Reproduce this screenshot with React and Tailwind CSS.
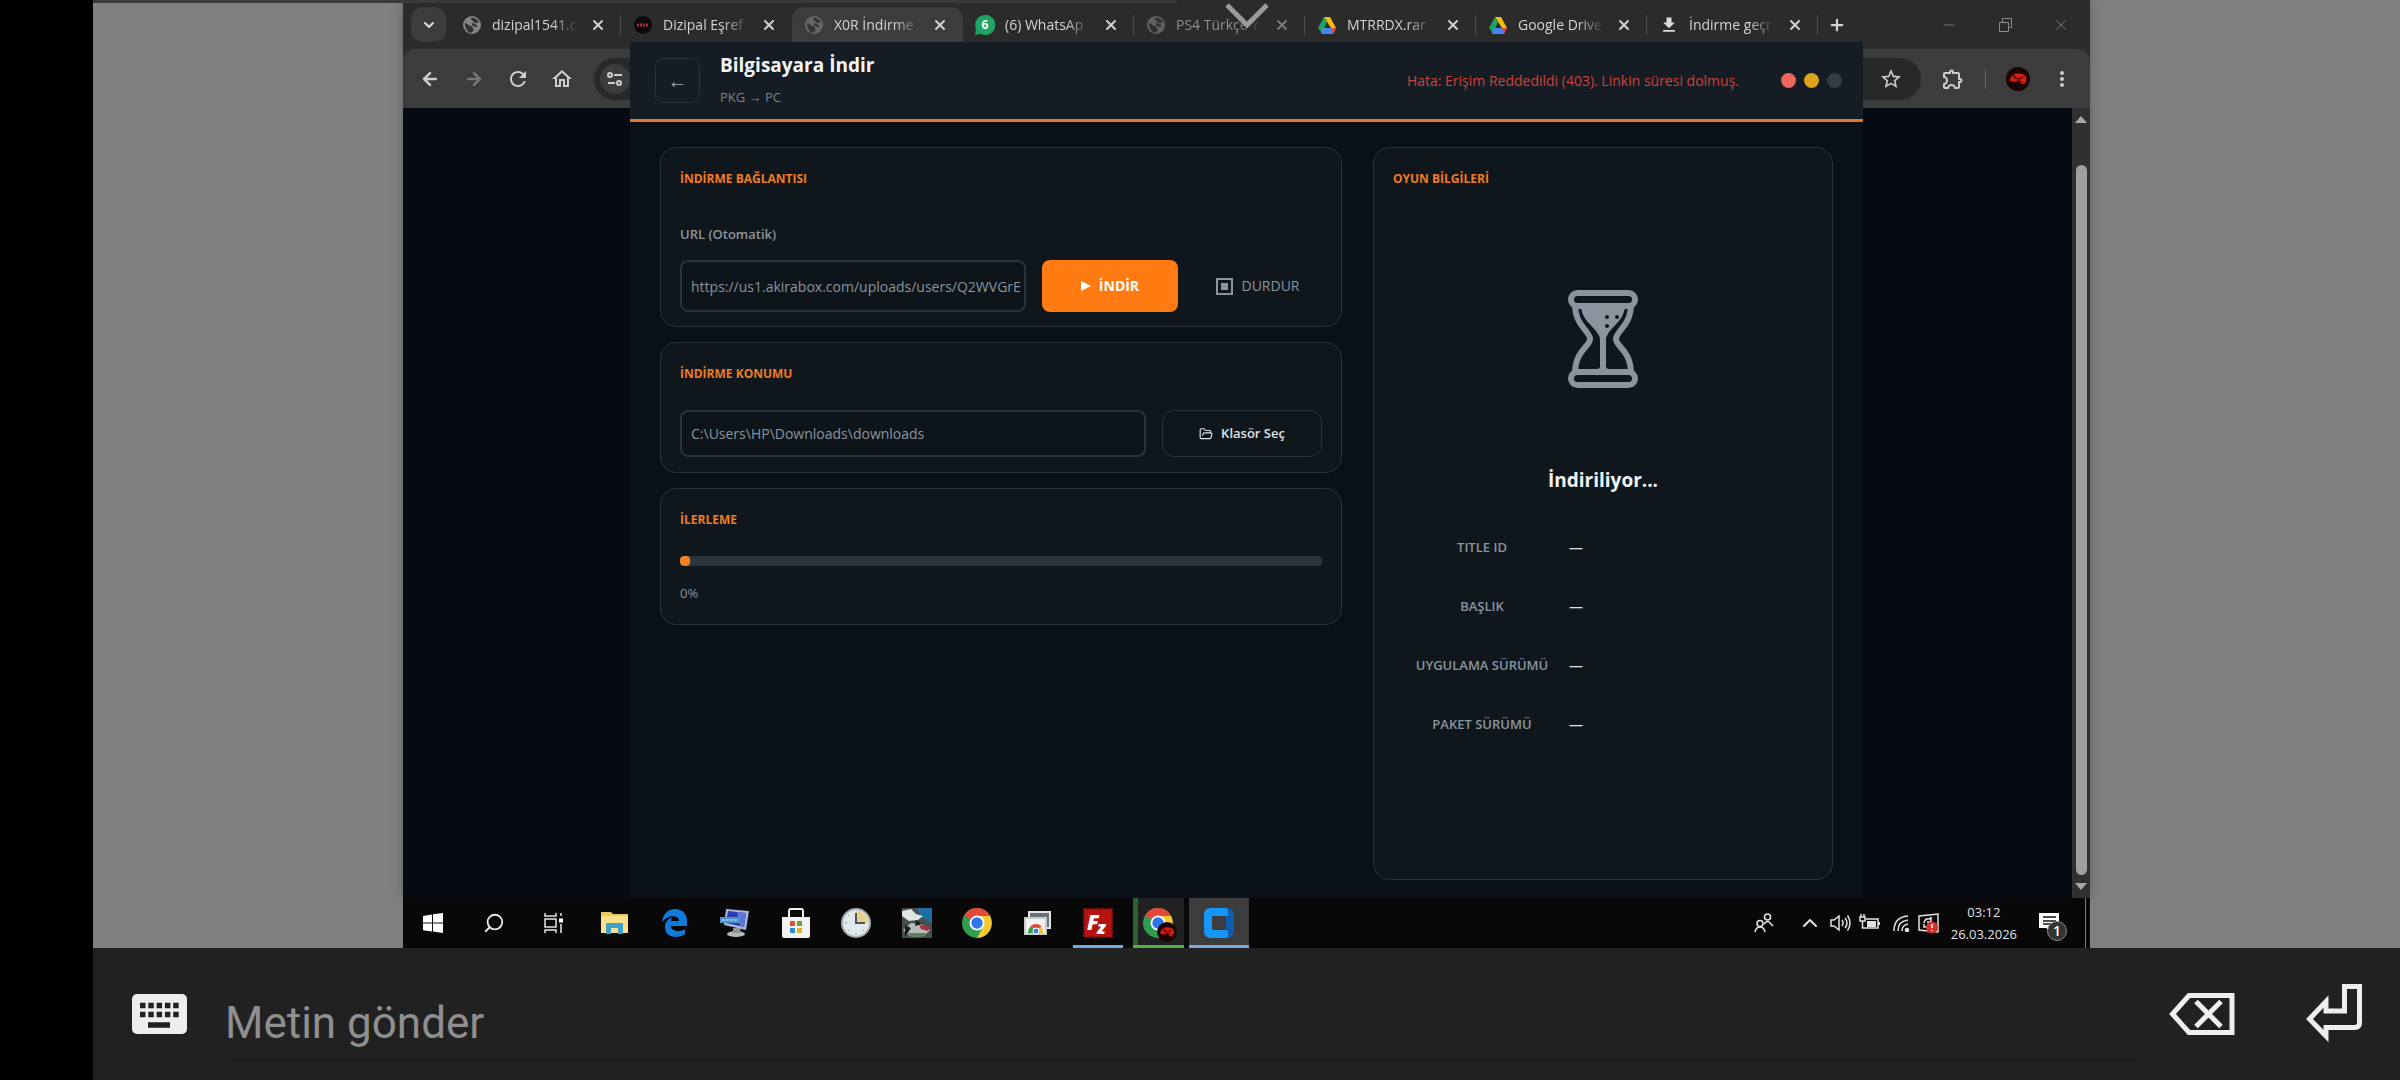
import { useState } from 'react';
import {
  ArrowLeft,
  ArrowRight,
  ChevronDown,
  ChevronUp,
  FolderOpen,
  Minus,
  Plus,
  Search,
  X,
} from 'lucide-react';
import { MdDownload, MdStarBorder, MdMoreVert, MdRefresh, MdOutlineHome, MdOutlineExtension } from 'react-icons/md';

const tabs = [
  { id: 1, title: 'dizipal1541.c', icon: 'globe' },
  { id: 2, title: 'Dizipal Eşref', icon: 'dizipal' },
  { id: 3, title: 'X0R İndirme', icon: 'globe', active: true },
  { id: 4, title: '(6) WhatsAp', icon: 'whatsapp' },
  { id: 5, title: 'PS4 Türkçe Y', icon: 'globe', dim: true },
  { id: 6, title: 'MTRRDX.rar', icon: 'drive' },
  { id: 7, title: 'Google Drive', icon: 'drive' },
  { id: 8, title: 'İndirme geçr', icon: 'download' },
];

const gameInfo = ['TITLE ID', 'BAŞLIK', 'UYGULAMA SÜRÜMÜ', 'PAKET SÜRÜMÜ'];

function GlobeIcon() {
  return (
    <svg viewBox="0 0 18 18" className="size-[18px]">
      <circle cx="9" cy="9" r="9" fill="#858585" />
      <path d="M2 7c3 0 3 3 6 3s1 3 3 4l-3 3C4 16 2 12 2 7zM8 2c0 3 2 2 3 4s3 1 5 0C14 3 11 1 8 2zM9 7c2 0 3 2 5 2v2c-3 0-6-2-5-4z" fill="#333" />
    </svg>
  );
}

function DizipalIcon() {
  return (
    <svg viewBox="0 0 18 18" className="size-[18px]">
      <circle cx="9" cy="9" r="9" fill="#0b0b0b" />
      <path d="M3 9h12" stroke="#b3282d" strokeWidth="3" strokeDasharray="2 1" />
    </svg>
  );
}

function WhatsAppIcon() {
  return (
    <svg viewBox="0 0 20 20" className="size-5">
      <path d="M10 0a10 10 0 1 1-4 19L0 20l1-6A10 10 0 0 1 10 0z" fill="#1fa463" />
      <text x="10" y="14" textAnchor="middle" fontSize="12" fontWeight="700" fill="#fff">6</text>
    </svg>
  );
}

function DriveIcon() {
  return (
    <svg viewBox="0 0 18 17" className="h-[17px] w-[18px]">
      <path d="M6 0h6l6 11h-5z" fill="#fbbc04" />
      <path d="M6 0l3 5-5 11-4-5z" fill="#1ea362" />
      <path d="M5 11h13l-3 6H3z" fill="#4285f4" />
      <path d="M13 11h5l-3 6z" fill="#ea4335" />
    </svg>
  );
}

function TabIcon({ name }) {
  if (name === 'dizipal') return <DizipalIcon />;
  if (name === 'whatsapp') return <WhatsAppIcon />;
  if (name === 'drive') return <DriveIcon />;
  if (name === 'download') return <MdDownload className="size-5 text-[#dcdcdc]" />;
  return <GlobeIcon />;
}

function Tab({ tab }) {
  return (
    <div className={`flex min-w-0 max-w-[171px] flex-1 items-center rounded-t-xl pb-[6px] pl-3 ${tab.active ? 'bg-[#3c3c3c]' : ''}`}>
      <span className={`flex w-5 shrink-0 justify-center ${tab.dim || tab.active ? 'opacity-60' : ''}`}>
        <TabIcon name={tab.icon} />
      </span>
      <span className={`ml-[10px] w-[86px] whitespace-nowrap mask-r-from-70% ${tab.dim ? 'text-[#8f8f8f]' : 'text-[#d4d4d4]'}`}>
        {tab.title}
      </span>
      <button aria-label="Sekmeyi kapat" className={`ml-3 ${tab.dim ? 'text-[#7a7a7a]' : 'text-[#d0d0d0]'}`}>
        <X className="size-4" strokeWidth={3} />
      </button>
      {!tab.active && tab.id !== 2 && <span className="ml-auto h-5 w-px bg-[#4c4c4c]" />}
    </div>
  );
}

function RedAvatar({ className }) {
  return (
    <svg viewBox="0 0 24 24" className={className}>
      <circle cx="12" cy="12" r="12" fill="#1c0403" />
      <path d="M4 12c2-5 7-7 12-5 4 1 5 4 4 7-1 3-4 4-6 2l-1-3-4 2-5-1z" fill="#d81c10" />
      <path d="M8 11l5 1 4-2M12 14l4 1M7 9l3 1" stroke="#5c0a06" strokeWidth="1.500" fill="none" />
    </svg>
  );
}

function Browser() {
  return (
    <div className="col-start-1 row-start-1 flex flex-col bg-[#2b2b2b]">
      <div className="flex h-[49px] pl-2 pt-[7px] text-sm">
        <button aria-label="Sekmelerde ara" className="mr-1 flex size-[35px] items-center justify-center rounded-xl bg-[#3c3c3c] text-[#dcdcdc]">
          <ChevronDown className="size-4" strokeWidth={3} />
        </button>
        <div className="flex h-[42px] min-w-0 flex-1">
          {tabs.map((tab) => (
            <Tab key={tab.id} tab={tab} />
          ))}
          <button aria-label="Yeni sekme" className="ml-[10px] pb-[6px] text-[#d0d0d0]">
            <Plus className="size-[18px]" strokeWidth={3} />
          </button>
        </div>
        <div className="flex h-9 gap-[38px] pr-5 text-[#8a8a8a]">
          <button aria-label="Simge durumuna küçült"><Minus className="size-[18px]" strokeWidth={1} /></button>
          <button aria-label="Geri yükle">
            <svg viewBox="0 0 18 18" className="size-[18px]" fill="none" stroke="currentColor">
              <path d="M3.500 6.500h9v9h-9zM6.500 6v-3.500h9v9h-3" />
            </svg>
          </button>
          <button aria-label="Kapat"><X className="size-[18px]" strokeWidth={1} /></button>
        </div>
      </div>

      <div className="flex h-[59px] items-center rounded-t-xl bg-[#3c3c3c] pl-[15px] text-[#cdcdcd]">
        <div className="flex gap-5">
          <button aria-label="Geri"><ArrowLeft className="size-6 p-[2px]" strokeWidth={3} /></button>
          <button aria-label="İleri" className="text-[#777]"><ArrowRight className="size-6 p-[2px]" strokeWidth={3} /></button>
          <button aria-label="Yenile"><MdRefresh className="size-6" /></button>
          <button aria-label="Ana sayfa"><MdOutlineHome className="size-6" /></button>
        </div>
        <div className="ml-5 flex h-[42px] flex-1 items-center justify-between rounded-full bg-[#282828] pl-[6px] pr-[18px]">
          <button aria-label="Site bilgileri" className="flex size-[30px] items-center justify-center rounded-full bg-[#3c3c3c]">
            <svg viewBox="0 0 18 18" className="size-[18px]" fill="none" stroke="currentColor" strokeWidth="2">
              <circle cx="4" cy="5" r="2" />
              <path d="M8 5h8M2 13h7" />
              <circle cx="13" cy="13" r="2" />
            </svg>
          </button>
          <button aria-label="Yer işareti ekle"><MdStarBorder className="size-6" /></button>
        </div>
        <button aria-label="Uzantılar" className="ml-5"><MdOutlineExtension className="size-6" /></button>
        <span className="mx-5 h-5 w-px bg-[#6a6a6a]" />
        <button aria-label="Profil"><RedAvatar className="size-6" /></button>
        <button aria-label="Menü" className="mr-4 ml-5"><MdMoreVert className="size-6" /></button>
      </div>

      <div className="flex flex-1 justify-end bg-[#060a12]">
        <div className="flex w-[18px] flex-col items-center gap-2 bg-[#303030] py-2 text-[#a8a8a8]">
          <svg viewBox="0 0 12 7" className="h-[7px] w-3" fill="currentColor"><path d="M6 0l6 7H0z" /></svg>
          <div className="mt-[34px] w-[11px] flex-1 rounded-full bg-[#9f9f9f]" />
          <svg viewBox="0 0 12 7" className="h-[7px] w-3" fill="currentColor"><path d="M0 0h12L6 7z" /></svg>
        </div>
      </div>
    </div>
  );
}

function Hourglass() {
  return (
    <svg viewBox="0 0 70 98" className="h-[98px] w-[70px]" fill="none" stroke="#8b949e">
      <rect x="3" y="3" width="64" height="13" rx="6.500" strokeWidth="6" />
      <rect x="3" y="82" width="64" height="13" rx="6.500" strokeWidth="6" />
      <path d="M7 14c0 22 15 27 15 35S7 60 7 84M63 14c0 22-15 27-15 35s15 11 15 35" strokeWidth="6" />
      <path d="M13 15h44c0 15-13 21-17 29-2 3-2 4-2 8v24c0 2 1 3 3 3h13c2 0 3 2 3 4H13c0-2 1-4 3-4h13c2 0 3-1 3-3V52c0-4 0-5-2-8-4-8-17-14-17-29z" fill="#8b949e" stroke="none" />
      <g fill="#0f171d" stroke="none">
        <circle cx="39" cy="27" r="2" />
        <circle cx="49" cy="27" r="2" />
        <circle cx="39" cy="36" r="2" />
      </g>
    </svg>
  );
}

function Card({ title, className, children }) {
  return (
    <section className={`rounded-2xl border border-[#2a333a] bg-[#0f171d] px-[19px] pt-[21px] ${className}`}>
      <h2 className="text-xs leading-5 font-bold text-[#f07c22]">{title}</h2>
      {children}
    </section>
  );
}

function DownloadWindow() {
  const [url, setUrl] = useState('https://us1.akirabox.com/uploads/users/Q2WVGrE');
  const [folder, setFolder] = useState('C:\\Users\\HP\\Downloads\\downloads');
  const progress = 0;

  return (
    <div className="z-10 col-start-1 row-start-1 mx-[227px] mt-[42px] flex flex-col bg-[#0a1017]">
      <header className="flex h-20 items-center border-b-[3px] border-[#dc7a34] bg-[#151c23] pr-[21px] pl-[25px]">
        <button aria-label="Geri dön" className="flex size-[45px] items-center justify-center rounded-lg border border-[#2a3138] text-xl text-[#a4abb2]">
          ←
        </button>
        <div className="ml-5 flex-1 pb-1">
          <h1 className="text-[19px] leading-7 font-bold text-[#f2f4f6]">Bilgisayara İndir</h1>
          <p className="mt-2 text-[13px] leading-5 text-[#7d858e]">PKG → PC</p>
        </div>
        <p className="text-sm text-[#cf433c]">Hata: Erişim Reddedildi (403). Linkin süresi dolmuş.</p>
        <div className="ml-[42px] flex gap-2">
          <span className="size-[15px] rounded-full bg-[#ee665c]" />
          <span className="size-[15px] rounded-full bg-[#dda31a]" />
          <span className="size-[15px] rounded-full bg-[#343b42]" />
        </div>
      </header>

      <main className="flex flex-1 gap-[31px] px-[30px] pt-[25px] pb-[18px]">
        <div className="flex min-w-0 flex-1 flex-col gap-[15px]">
          <Card title="İNDİRME BAĞLANTISI" className="pb-[14px]">
            <label htmlFor="url" className="mt-[35px] block text-[13px] leading-5 font-semibold text-[#8b949e]">
              URL (Otomatik)
            </label>
            <div className="mt-4 flex gap-4">
              <input
                id="url"
                value={url}
                onChange={(e) => setUrl(e.target.value)}
                className="h-[52px] min-w-0 flex-1 rounded-lg border-2 border-[#2b333a] bg-[#0d141a] pl-[9px] text-sm text-[#8b949e]"
              />
              <button className="flex w-[136px] items-center justify-center gap-2 rounded-lg bg-[#ff7b12] text-sm font-bold text-white">
                <svg viewBox="0 0 10 10" className="size-[10px]" fill="currentColor"><path d="M0 0l10 5-10 5z" /></svg>
                İNDİR
              </button>
              <button className="flex w-[128px] items-center justify-center gap-2 text-sm text-[#8b949e]">
                <svg viewBox="0 0 17 17" className="size-[17px]" fill="none" stroke="currentColor" strokeWidth="2">
                  <path d="M1 1h15v15H1z" />
                  <path d="M5 5h7v7H5z" fill="currentColor" stroke="none" />
                </svg>
                DURDUR
              </button>
            </div>
          </Card>

          <Card title="İNDİRME KONUMU" className="pb-[15px]">
            <div className="mt-[26px] flex gap-4">
              <input
                aria-label="İndirme konumu"
                value={folder}
                onChange={(e) => setFolder(e.target.value)}
                className="h-[47px] min-w-0 flex-1 rounded-lg border-2 border-[#2b333a] bg-[#0d141a] px-[9px] text-sm text-[#8b949e]"
              />
              <button className="flex w-[160px] items-center justify-center gap-2 rounded-xl border border-[#2a333a] text-[13px] font-semibold text-[#dfe3e7]">
                <FolderOpen className="size-[14px]" />
                Klasör Seç
              </button>
            </div>
          </Card>

          <Card title="İLERLEME" className="pb-[21px]">
            <div className="mt-[26px] h-[10px] overflow-hidden rounded-sm bg-[#2d353c]">
              <div className="h-full min-w-[10px] rounded-sm bg-[#f5811f]" style={{ width: `${progress}%` }} />
            </div>
            <p className="mt-[17px] text-[13px] leading-5 text-[#8b949e]">{progress}%</p>
          </Card>
        </div>

        <Card title="OYUN BİLGİLERİ" className="flex w-[460px] shrink-0 flex-col">
          <div className="mt-[101px] flex justify-center">
            <Hourglass />
          </div>
          <p className="mt-[78px] text-center text-[19px] leading-7 font-bold text-[#f2f4f6]">İndiriliyor...</p>
          <dl className="mt-[43px] grid grid-cols-[152px_1fr] gap-x-[11px] gap-y-[39px] pl-[13px] leading-5">
            {gameInfo.map((label) => (
              <div key={label} className="contents">
                <dt className="text-center text-[13px] font-semibold text-[#8b949e]">{label}</dt>
                <dd className="text-sm leading-5 font-semibold text-[#dfe3e7]">—</dd>
              </div>
            ))}
          </dl>
        </Card>
      </main>
    </div>
  );
}

function ChromeLogo() {
  return (
    <svg viewBox="0 0 30 30" className="size-[30px]">
      <circle cx="15" cy="15" r="15" fill="#2f9e4f" />
      <path d="M15 15L2 7.500A15 15 0 0 1 28 7.500z" fill="#e2493b" />
      <path d="M15 8h13a15 15 0 0 1-13 22l6-11z" fill="#fcc934" />
      <circle cx="15" cy="15" r="7.500" fill="#fff" />
      <circle cx="15" cy="15" r="5.700" fill="#2f74e8" />
    </svg>
  );
}

function StartIcon() {
  return (
    <svg viewBox="0 0 20 20" className="size-5" fill="#fff">
      <path d="M0 3l9-1.500V9.500H0zM10 1.300L20 0v9.500H10zM0 10.500h9v8L0 17.200zM10 10.500h10V20l-10-1.400z" />
    </svg>
  );
}

function TaskViewIcon() {
  return (
    <svg viewBox="0 0 20 20" className="size-5" fill="none" stroke="#e6e6e6" strokeWidth="1.500">
      <path d="M1 0v3h11V0M1 20v-3h11v3M1 6h11v8H1zM17 0v3M17 11v9" />
      <path d="M15 5.500h4v4h-4z" fill="#fff" stroke="none" />
    </svg>
  );
}

function ExplorerIcon() {
  return (
    <svg viewBox="0 0 27 24" className="h-6 w-[27px]">
      <path d="M0 1h10l2 2h15v19H0z" fill="#e9c65e" />
      <path d="M0 5h27v17H0z" fill="#fbe08c" />
      <path d="M5 13q0-1 1-1h15q1 0 1 1v10h-5v-6h-7v6H5z" fill="#3da2c9" />
    </svg>
  );
}

function EdgeIcon() {
  return (
    <svg viewBox="0 0 26 28" className="h-7 w-[26px]" fill="#0f7bdc">
      <path d="M0 13C1 5 6 0 13 0c8 0 13 6 12 15v2H9c0 5 9 7 14 3v5C16 30 3 29 3 18c0-5 3-8 7-10-1 1-1 3-1 4h8c0-6-11-7-17 1z" />
    </svg>
  );
}

function RemotePcIcon() {
  return (
    <svg viewBox="0 0 30 30" className="size-[30px]">
      <ellipse cx="16" cy="26" rx="9" ry="3" fill="#b8bcb8" />
      <path d="M13 20h7l1 5h-8z" fill="#8f9490" />
      <path d="M6 1l23 2-3 19L4 17z" fill="#aab6d6" />
      <path d="M8 3l18 2-2 14L6 15z" fill="#2c3fae" />
      <path d="M17 4l9 1-2 14-4-1z" fill="#5d78d8" />
      <path d="M0 9h20v6H0z" fill="#4b93d0" />
      <path d="M2 12h16" stroke="#cfe6f7" strokeDasharray="3 1" />
    </svg>
  );
}

function StoreIcon() {
  return (
    <svg viewBox="0 0 30 30" className="size-[30px]">
      <path d="M8 10V3q0-2 2-2h10q2 0 2 2v7" fill="none" stroke="#f0f0f0" strokeWidth="2" />
      <path d="M1 9h28v19q0 2-2 2H3q-2 0-2-2z" fill="#f3f3f3" />
      <path d="M9 13h5v5H9z" fill="#d9562b" />
      <path d="M16 13h5v5h-5z" fill="#6ba42c" />
      <path d="M9 20h5v5H9z" fill="#2b8ed0" />
      <path d="M16 20h5v5h-5z" fill="#e8b022" />
    </svg>
  );
}

function ClockIcon() {
  return (
    <svg viewBox="0 0 30 30" className="size-[30px]">
      <circle cx="15" cy="15" r="14" fill="#dfe9ec" stroke="#a7adae" strokeWidth="2" />
      <path d="M15 15V3a12 12 0 0 1 12 12z" fill="#e8d28a" />
      <path d="M15 5v10h9" fill="none" stroke="#4b5560" strokeWidth="2" />
      <path d="M15 25v2M4 15h2M7 7l1 1M7 23l1-1M23 23l-1-1" stroke="#8a9499" />
    </svg>
  );
}

function PhotoIcon() {
  return (
    <svg viewBox="0 0 30 30" className="size-[30px]">
      <path d="M0 0h30v30H0z" fill="#46504f" />
      <path d="M15 0h15v15L19 9z" fill="#1c6fa5" />
      <path d="M0 3l9-2 5 5 7 2-5 4-9 1-7-5z" fill="#dfe6e6" />
      <path d="M1 22l8-7 10 1 9 6-6 6H8z" fill="#b6bcb9" />
      <path d="M3 17l6 3-6 9zM14 12l6 4-7 2z" fill="#161c1c" />
      <path d="M17 17l11 2-2 4-7-2z" fill="#b02c3c" />
      <path d="M6 25h18l-3 4H9z" fill="#5d7f62" />
    </svg>
  );
}

function RemoteDesktopIcon() {
  return (
    <svg viewBox="0 0 27 25" className="h-[25px] w-[27px]">
      <path d="M5 1h21v16H5z" fill="#6d7173" stroke="#e6e6e6" strokeWidth="2" />
      <path d="M1 7h21v16H1z" fill="#f2f2f2" stroke="#c9cccd" strokeWidth="2" />
      <path d="M4 22a7.500 7.500 0 0 1 4-7l3 7z" fill="#3a9c52" />
      <path d="M6 16c3-4 9-4 12 0l-6 2z" fill="#dd4b3e" />
      <path d="M15 17h3q2 2 1 5h-5z" fill="#f2bf3b" />
      <circle cx="12" cy="20" r="3" fill="#3f7fe0" stroke="#fff" />
    </svg>
  );
}

function FileZillaIcon() {
  return (
    <svg viewBox="0 0 30 30" className="size-[30px]">
      <path d="M1 1h28v28H1z" fill="#b5130f" stroke="#8c0e0b" strokeWidth="2" strokeDasharray="2 1" />
      <text x="4" y="22" fontSize="21" fontWeight="800" fontStyle="italic" fill="#fff">F</text>
      <text x="14" y="26" fontSize="18" fontWeight="800" fontStyle="italic" fill="#fff">z</text>
    </svg>
  );
}

function BlueSquareIcon() {
  return (
    <svg viewBox="0 0 30 30" className="size-[30px]">
      <rect width="30" height="30" rx="7" fill="#0d5fae" />
      <path d="M7 0h14q3 0 3 3v3q0 2-3 2H10q-2 0-2 2v10q0 2 2 2h11q3 0 3 2v3q0 3-3 3H7q-7 0-7-7V7q0-7 7-7z" fill="#1496fb" />
      <rect x="8" y="8" width="14" height="14" rx="2" fill="#3c3c3c" />
    </svg>
  );
}

function ChromeProfileIcon() {
  return (
    <span className="relative">
      <ChromeLogo />
      <RedAvatar className="absolute -right-1 -bottom-1 size-5" />
    </span>
  );
}

const taskbarApps = [
  { name: 'Başlat', icon: <StartIcon /> },
  { name: 'Ara', icon: <Search className="size-[22px] -scale-x-100 text-[#e6e6e6]" strokeWidth={2} /> },
  { name: 'Görev görünümü', icon: <TaskViewIcon /> },
  { name: 'Dosya Gezgini', icon: <ExplorerIcon /> },
  { name: 'Edge', icon: <EdgeIcon /> },
  { name: 'Uzak bilgisayar', icon: <RemotePcIcon /> },
  { name: 'Store', icon: <StoreIcon /> },
  { name: 'Saat', icon: <ClockIcon /> },
  { name: 'Fotoğraf', icon: <PhotoIcon /> },
  { name: 'Chrome', icon: <ChromeLogo /> },
  { name: 'Uzak masaüstü', icon: <RemoteDesktopIcon /> },
  { name: 'FileZilla', icon: <FileZillaIcon />, style: 'mx-[5px] border-b-[3px] border-[#77a8dc] pt-[3px]' },
  { name: 'Chrome profili', icon: <ChromeProfileIcon />, style: 'mx-[5px] bg-[linear-gradient(90deg,#2e6030_5px,#212121_5px)] border-b-[3px] border-[#4db04a] pt-[3px]' },
  { name: 'İndirici', icon: <BlueSquareIcon />, style: 'bg-[#3c3c3c] border-b-[3px] border-[#77a8dc] pt-[3px]' },
];

function Tray() {
  return (
    <div className="flex items-center text-[#e2e2e2]">
      <svg viewBox="0 0 20 20" className="mr-6 size-5" fill="none" stroke="currentColor" strokeWidth="1.600">
        <circle cx="13.500" cy="4" r="3" />
        <path d="M10 11q3.500-5 7 0l2 2" />
        <circle cx="6" cy="10.500" r="3" />
        <path d="M1 19q1-5 5-5t5 5" />
      </svg>
      <ChevronUp className="mr-2 size-6" strokeWidth={2} />
      <svg viewBox="0 0 21 20" className="mr-2 h-5 w-[21px]" fill="none" stroke="currentColor" strokeWidth="1.500">
        <path d="M1 7h3l5-4v14l-5-4H1zM12 7q2 3 0 6M15 5q4 5 0 10M17.500 2.500q5 7.500 0 15" />
      </svg>
      <svg viewBox="0 0 21 20" className="mr-3 h-5 w-[21px]" fill="none" stroke="currentColor" strokeWidth="1.500">
        <path d="M1 4h5v4H1zM2 1v3M5 1v3M3.500 8v7H7M7 6h12v9H7" />
        <path d="M8 8h9v6H8zM19 9h2v3h-2z" fill="currentColor" stroke="none" />
      </svg>
      <svg viewBox="0 0 18 18" className="mr-2 size-[18px]" fill="none" stroke="currentColor" strokeWidth="1.500">
        <path d="M2 17Q2 3 16 2M6 17Q6 7 16 6M10 17q0-6 6-7" />
        <circle cx="15" cy="16" r="1.500" fill="currentColor" />
      </svg>
      <svg viewBox="0 0 21 21" className="size-[21px]" fill="none" stroke="currentColor" strokeWidth="1.500">
        <path d="M1 3l19-2v18L1 17zM6 10q1-5 6-4l1-2v5H9M6 11v3h5" />
        <circle cx="14" cy="14.500" r="6" fill="#d8322c" stroke="none" />
        <path d="M14 11v4M14 17v1" stroke="#fff" />
      </svg>
      <div className="ml-3 text-center text-[13px] leading-[22px]">
        <div>03:12</div>
        <div>26.03.2026</div>
      </div>
      <button aria-label="1 bildirim" className="relative mr-[25px] ml-[22px]">
        <svg viewBox="0 0 21 20" className="h-5 w-[21px]">
          <path d="M0 0h20v15h-8v4l-5-4H0z" fill="#fff" />
          <path d="M4 4h13M4 8h13M4 11h8" stroke="#111" strokeWidth="1.500" />
        </svg>
        <span className="absolute top-2 left-2 flex size-5 items-center justify-center rounded-full border border-[#8a8a8a] bg-[#333] text-sm leading-none font-semibold text-white">
          1
        </span>
      </button>
      <span className="mr-1 h-full w-px bg-[#7a7a7a]" />
    </div>
  );
}

function Taskbar() {
  return (
    <footer className="flex h-[50px] justify-between bg-[#080808]">
      <div className="grid w-[846px] grid-cols-14">
        {taskbarApps.map((app) => (
          <button key={app.name} aria-label={app.name} className={`flex items-center justify-center ${app.style || ''}`}>
            {app.icon}
          </button>
        ))}
      </div>
      <Tray />
    </footer>
  );
}

function SendBar() {
  return (
    <div className="flex h-[132px] items-center bg-[#212121] pr-9 pl-[39px] text-[#eeeeee]">
      <button aria-label="Klavye">
        <svg viewBox="0 0 55 46" className="h-[46px] w-[55px]">
          <rect y="3" width="55" height="40" rx="5" fill="#eee" />
          <path d="M8 14.500h41M8 23.500h41" stroke="#212121" strokeWidth="5.500" strokeDasharray="5.500 2.800" />
          <path d="M16 34h22" stroke="#212121" strokeWidth="5.500" />
        </svg>
      </button>
      <input
        aria-label="Metin gönder"
        placeholder="Metin gönder"
        className="mt-5 ml-[38px] h-[74px] min-w-0 flex-1 border-b-2 border-[#1c1c1c] font-[Roboto,sans-serif] text-[44px] text-[#eeeeee] outline-none placeholder:text-[#8f8f8f]"
      />
      <button aria-label="Sil" className="ml-[31px]">
        <svg viewBox="0 0 66 42" className="h-[42px] w-[66px]" fill="none" stroke="currentColor" strokeWidth="5">
          <path d="M20 2.500h43v37H20L3.500 21zM27 8.500l25 25M52 8.500l-25 25" />
        </svg>
      </button>
      <button aria-label="Gönder" className="ml-[71px]">
        <svg viewBox="0 0 58 60" className="h-[60px] w-[58px]" fill="none" stroke="currentColor" strokeWidth="5">
          <path d="M38.500 2.500h15v36q0 5-5 5H20v8.500L3.500 35 20 17.500V27h18.500z" />
        </svg>
      </button>
    </div>
  );
}

export default function App() {
  return (
    <div className="flex min-h-screen bg-black font-['Open_Sans','Noto_Sans',sans-serif]">
      <div className="w-[93px] shrink-0" />
      <div className="relative flex min-w-0 flex-1 flex-col bg-[#808080]">
        <div className="flex flex-1 flex-col px-[310px]">
          <div className="grid flex-1 shadow-[0_0_12px_rgba(0,0,0,0.25)]">
            <Browser />
            <DownloadWindow />
          </div>
          <Taskbar />
        </div>
        <SendBar />

        <div className="absolute top-0 left-0 h-[3px] w-[47%] bg-[#3a3a3a]" />
        <button aria-label="Araç çubuğunu göster" className="absolute top-[3px] left-1/2 z-20 text-[#9a9a9a]">
          <svg viewBox="0 0 44 26" className="h-[26px] w-11 -translate-x-1/2" fill="none" stroke="currentColor" strokeWidth="5">
            <path d="M2 2l20 20L42 2" />
          </svg>
        </button>
      </div>
    </div>
  );
}
